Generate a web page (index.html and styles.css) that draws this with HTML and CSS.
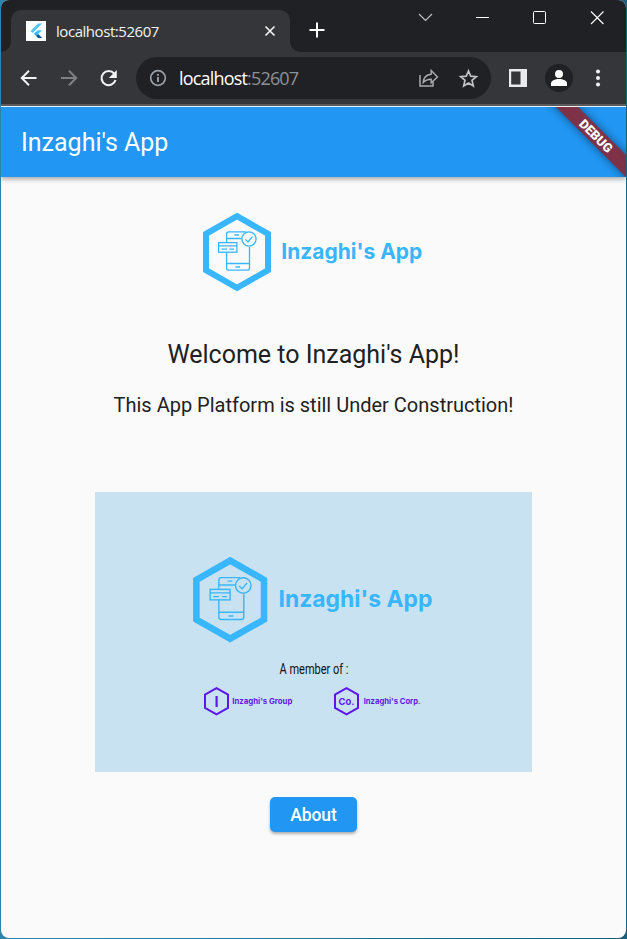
FILE: index.html
```html
<!DOCTYPE html>
<html lang="en">
<head>
<meta charset="utf-8">
<title>Inzaghi's App</title>
<link rel="stylesheet" href="styles.css">
</head>
<body>
<svg class="defs" width="0" height="0" aria-hidden="true">
  <symbol id="brand" viewBox="0 0 80 80">
    <path d="M35 4.200 66 21.800V58.200L35 75.800 4 58.200V21.800Z" fill="none" stroke="#38b6ff" stroke-width="6"/>
    <g fill="none" stroke="#38b6ff" stroke-width="1.300">
      <path d="M24.600 30V22a2.200 2.200 0 0 1 2.200-2.200H44M47.500 35V56a2.200 2.200 0 0 1-2.200 2.200H26.800A2.200 2.200 0 0 1 24.600 56V40.500M24.600 26.500H39.500M24.600 51.500H47.500M32.500 23H37M33.500 55H38"/>
      <rect x="16.600" y="30.600" width="18.300" height="9.600"/>
      <path d="M16.600 33.800H35M19.500 37.200H25M27.500 37.200H32"/>
      <circle cx="47" cy="27" r="7.100"/>
      <path d="M43.300 27.400 46 30 50.500 24.600"/>
    </g>
  </symbol>
</svg>
<div class="window">
  <div class="tabs">
    <div class="tab">
      <svg class="favicon" viewBox="0 0 20 20"><path fill="#fff" d="M0 0h20v20H0z"/><path d="M4.500 10 12 2.500h4.200L6.700 12z" fill="#54c5f8"/><path d="m8 13 3.600-3.700H16L12.200 13z" fill="#40c4ff"/><path d="m8 13 2.100-2.100 2.100 2.100-2.100 2.100z" fill="#29b6f6"/><path d="m10.100 15.100 2.100-2.100 4 4H12z" fill="#01579b"/></svg>
      <span class="tab-title">localhost:52607</span>
      <svg class="tab-close" viewBox="0 0 12 12"><path d="m1.500 1.500 9 9m0-9-9 9" stroke="#f1f1f1" stroke-width="1.700"/></svg>
    </div>
    <svg class="plus" viewBox="0 0 16 16"><path d="M8 .5v15M.5 8h15" stroke="#fff" stroke-width="2"/></svg>
    <div class="controls">
      <svg viewBox="0 0 57 36"><path d="m21 14 6.500 6.500 6.500-6.500" fill="none" stroke="#c4c4c6" stroke-width="1.100"/></svg>
      <svg viewBox="0 0 57 36"><path d="M21 17.500h13" stroke="#fff"/></svg>
      <svg viewBox="0 0 57 36"><rect x="21.500" y="11.500" width="12" height="12" rx="1" fill="none" stroke="#fff"/></svg>
      <svg viewBox="0 0 57 36"><path d="m22 11.500 12.500 12.500m0-12.500-12.500 12.500" stroke="#fff" stroke-width="1.100"/></svg>
    </div>
  </div>
  <div class="toolbar">
    <svg class="nav" viewBox="0 0 40 40"><path d="M27.500 20H13M20 12.800 12.800 20l7.200 7.200" fill="none" stroke="#f1f3f4" stroke-width="2"/></svg>
    <svg class="nav" viewBox="0 0 40 40"><path d="M12 20h15M20 12.800l7.200 7.200-7.200 7.200" fill="none" stroke="#808185" stroke-width="2"/></svg>
    <svg class="nav" viewBox="0 0 40 40"><path d="M25.200 15.600A7.100 7.100 0 1 0 26.500 22" fill="none" stroke="#f1f3f4" stroke-width="2.100"/><path d="M27.800 12v8h-8z" fill="#f1f3f4"/></svg>
    <div class="address">
      <svg class="info" viewBox="0 0 18 18"><circle cx="9" cy="9" r="7.300" fill="none" stroke="#9aa0a6" stroke-width="1.700"/><path d="M9 8v5M9 5v1.700" stroke="#9aa0a6" stroke-width="1.900"/></svg>
      <span class="url"><span class="host">localhost</span>:52607</span>
      <svg class="action" viewBox="0 0 40 40"><path d="M12 17v11h13v-4" fill="none" stroke="#a9abad" stroke-width="1.500"/><path d="M15.200 24.500c.4-5 3.200-8 8-8.300V12.500l6.300 6.400-6.300 5.900v-3.600c-3.500 0-5.800.8-8 3.300z" fill="none" stroke="#a9abad" stroke-width="1.400"/></svg>
      <svg class="action" viewBox="0 0 40 40"><path d="m20.500 13 2.200 5.200 5.600.5-4.300 3.700 1.300 5.500-4.800-2.900-4.800 2.900 1.300-5.500-4.300-3.700 5.600-.5z" fill="none" stroke="#bfc1c3" stroke-width="1.700"/></svg>
    </div>
    <svg class="panel" viewBox="0 0 18 18"><path d="M0 0h18v18H0zM2.200 2.600v12.800h9.300V2.600z" fill="#e8eaed" fill-rule="evenodd"/></svg>
    <svg class="avatar" viewBox="0 0 28 28"><circle cx="14" cy="14" r="14" fill="#202124"/><circle cx="14" cy="10" r="4" fill="#fff"/><path d="M6 22v-2.500c0-3 4-4.500 8-4.500s8 1.500 8 4.500V22z" fill="#fff"/></svg>
    <svg class="dots" viewBox="0 0 6 18"><g fill="#f1f3f4"><circle cx="3" cy="2.500" r="2"/><circle cx="3" cy="9" r="2"/><circle cx="3" cy="15.500" r="2"/></g></svg>
  </div>
  <header class="appbar">
    <h1>Inzaghi's App</h1>
    <svg class="debug" viewBox="0 0 80 70">
      <path class="band" d="M-10-20H12L102 70V92z"/>
      <text transform="translate(50 29) rotate(45)" x="0" y="4.500" text-anchor="middle" textLength="41" lengthAdjust="spacingAndGlyphs" font-family="Roboto" font-weight="900" font-size="12.750" fill="#fff">DEBUG</text>
    </svg>
  </header>
  <main>
    <svg class="logo" viewBox="0 0 224 80">
      <use href="#brand" width="80" height="80"/>
      <text class="brand-name" x="79.300" y="47.200" textLength="141" lengthAdjust="spacingAndGlyphs">Inzaghi's App</text>
    </svg>
    <h2>Welcome to Inzaghi's App!</h2>
    <p class="status">This App Platform is still Under Construction!</p>
    <section class="banner">
      <svg class="banner-logo" viewBox="0 0 224 80">
        <use href="#brand" width="80" height="80"/>
        <text class="brand-name" x="79.300" y="47.200" textLength="141" lengthAdjust="spacingAndGlyphs">Inzaghi's App</text>
      </svg>
      <svg class="members" viewBox="0 0 222 56">
        <text x="76.500" y="13.500" textLength="69" lengthAdjust="spacingAndGlyphs" font-family="Roboto" font-size="14" fill="#111">A member of :</text>
        <g fill="none" stroke="#5e17eb" stroke-width="2"><path d="m13.500 28.200 11.500 6.500v13.200l-11.500 6.500L2 47.900V34.700zM143.500 28.200l11.500 6.500v13.200l-11.500 6.500-11.500-6.500V34.700z"/></g>
        <g fill="#5e17eb" font-family="Inter" font-weight="700">
          <text x="13.500" y="46.600" text-anchor="middle" font-size="14.500">I</text>
          <text x="143.500" y="44.700" text-anchor="middle" font-size="9.500" textLength="16" lengthAdjust="spacingAndGlyphs">Co.</text>
          <text x="29.300" y="44.200" font-size="8" textLength="60" lengthAdjust="spacingAndGlyphs">Inzaghi's Group</text>
          <text x="160.700" y="44.200" font-size="8" textLength="57" lengthAdjust="spacingAndGlyphs">Inzaghi's Corp.</text>
        </g>
      </svg>
    </section>
    <button class="about">About</button>
  </main>
</div>
</body>
</html>
```
FILE: styles.css
```css
* { box-sizing: border-box; }
body {
  margin: 0;
  height: 939px;
  padding: 0 1px 1px;
  overflow: hidden;
  background: linear-gradient(90deg, #2d84ac, #1c607f);
  font-family: Roboto, sans-serif;
}
svg { display: block; flex: none; }
.defs { position: absolute; }
.window {
  height: 938px;
  display: flex;
  flex-direction: column;
  overflow: hidden;
  border-radius: 8px;
  background: #fafafa;
}
.tabs {
  height: 52px;
  flex: none;
  display: flex;
  background: #202124;
}
.tab {
  position: relative;
  width: 279px;
  height: 42px;
  margin: 10px 0 0 10px;
  padding: 0 15px;
  display: flex;
  align-items: center;
  border-radius: 10px 10px 0 0;
  background: #35363a;
}
.tab::before, .tab::after {
  content: "";
  position: absolute;
  bottom: 0;
  width: 10px;
  height: 10px;
}
.tab::before { left: -10px; background: radial-gradient(circle at 0 0, #202124 9.5px, #35363a 10px); }
.tab::after { right: -10px; background: radial-gradient(circle at 100% 0, #202124 9.5px, #35363a 10px); }
.favicon { width: 20px; height: 20px; }
.tab-title {
  margin: -1px 0 0 10px;
  flex: 1;
  font: 15px "Open Sans", sans-serif;
  letter-spacing: -0.45px;
  color: #f1f3f4;
}
.tab-close { width: 12px; height: 12px; margin-right: -1px; }
.plus { width: 16px; height: 16px; margin: 22px 0 0 19px; }
.controls { display: flex; margin-left: auto; }
.controls svg { width: 57px; height: 36px; }
.toolbar {
  height: 55px;
  flex: none;
  display: flex;
  align-items: center;
  padding: 0 24px 3px 8px;
  border-bottom: 1px solid #fff;
  background: linear-gradient(#35363a 52px, #5b5c60 52px);
}
.nav { width: 40px; height: 40px; }
.address {
  width: 355px;
  height: 42px;
  margin-left: 7px;
  padding: 0 3px 0 13px;
  display: flex;
  align-items: center;
  border-radius: 21px;
  background: #202124;
}
.info { width: 18px; height: 18px; }
.url {
  flex: 1;
  margin-left: 12px;
  font: 18px "Open Sans", sans-serif;
  letter-spacing: -0.82px;
  color: #8e9194;
}
.host { color: #fff; }
.action { width: 40px; height: 40px; }
.panel { width: 18px; height: 18px; margin-left: 18px; }
.avatar { width: 28px; height: 28px; margin-left: 18px; }
.dots { width: 6px; height: 18px; margin-left: 22px; }
.appbar {
  position: relative;
  height: 70px;
  flex: none;
  display: flex;
  align-items: center;
  padding: 2px 0 0 20px;
  background: #2196f3;
  box-shadow: 0 2px 5px rgba(0, 0, 0, .35);
}
h1, h2, p { margin: 0; font-weight: 400; }
h1 { font-size: 25px; line-height: 30px; color: #fff; }
.debug {
  position: absolute;
  top: 0;
  right: 0;
  width: 80px;
  height: 70px;
  overflow: hidden;
}
.band { fill: #7d3248; filter: drop-shadow(0 0 4px rgba(0, 0, 0, .5)); }
main {
  flex: 1;
  display: flex;
  flex-direction: column;
  align-items: center;
}
.logo { width: 224px; height: 80px; margin-top: 35px; overflow: visible; }
.brand-name { font: 700 21.5px Inter, sans-serif; fill: #38b6ff; }
h2 { margin-top: 48px; font-size: 25px; line-height: 30px; color: #212121; }
.status { margin-top: 22px; font-size: 20px; line-height: 26px; color: #212121; }
.banner {
  width: 437px;
  height: 280px;
  margin-top: 74px;
  padding-top: 64px;
  display: flex;
  flex-direction: column;
  align-items: center;
  background: #c9e2f1;
}
.banner-logo { width: 244.4px; height: 87.3px; margin-left: 1px; overflow: visible; }
.members { width: 222px; height: 56px; margin-top: 16.7px; }
.about {
  width: 87px;
  height: 35px;
  margin-top: 25px;
  padding: 0;
  border: 0;
  border-radius: 5px;
  background: #2196f3;
  box-shadow: 0 2px 3px rgba(0, 0, 0, .3);
  font: 500 17.5px Roboto, sans-serif;
  letter-spacing: -0.1px;
  color: #fff;
}
```
